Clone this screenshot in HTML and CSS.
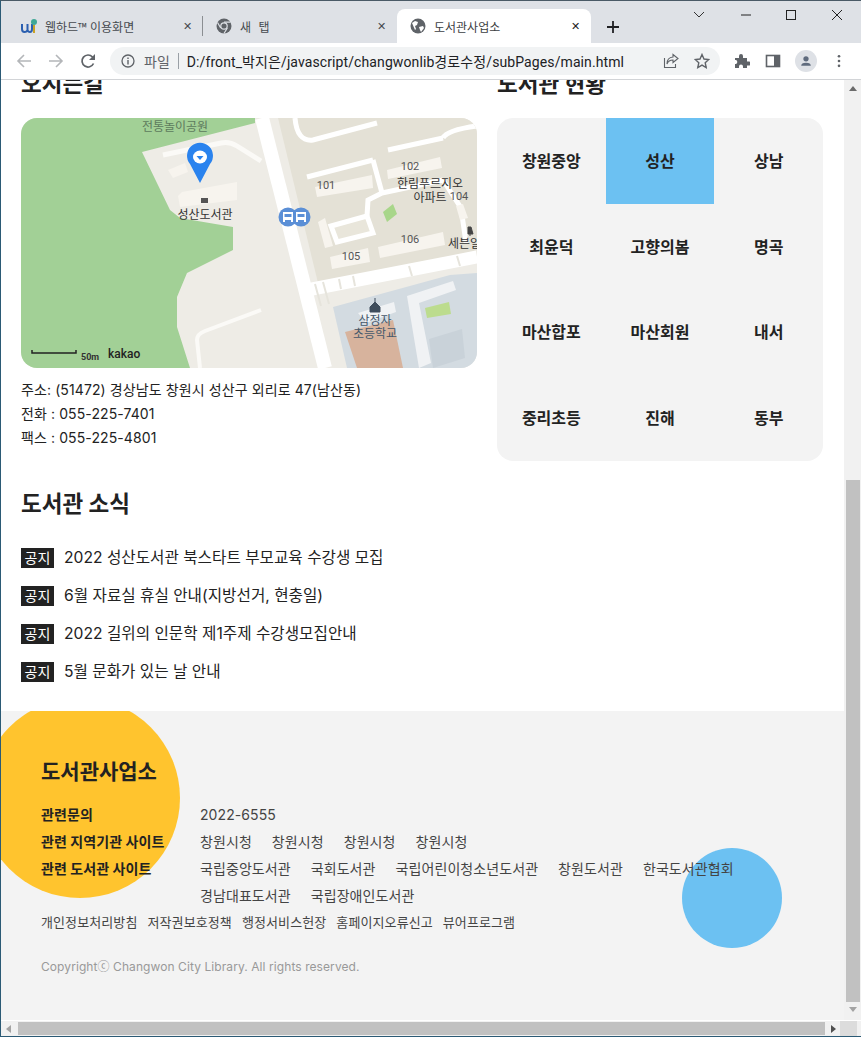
FILE: index.html
```html
<!DOCTYPE html>
<html lang="ko">
<head>
    <meta charset="UTF-8">
    <title>도서관사업소</title>
    <link rel="stylesheet" href="styles.css">
</head>
<body>
<div class="window">
    <!-- 탭 영역 -->
    <div class="tab-strip">
        <div class="tab tab-first">
            <svg class="tab-icon" viewBox="0 0 16 16">
                <path d="M1 6v5q0 3 2.500 3t3-2v-6m0 6q.5 2 2.500 2t2-3v-5" fill="none" stroke="#2b5fb0" stroke-width="2"/>
                <path d="M13 15V7" stroke="#c9a227" stroke-width="2"/>
                <circle cx="13" cy="4" r="3" fill="#3fa796"/>
            </svg>
            <span class="tab-title">웹하드™ 이용화면</span>
            <span class="tab-close">✕</span>
        </div>
        <div class="tab tab-second">
            <svg class="tab-icon" viewBox="0 0 16 16">
                <circle cx="8" cy="8" r="7.500" fill="#5f6368"/>
                <circle cx="8" cy="8" r="3.800" fill="#dee1e6"/>
                <circle cx="8" cy="8" r="2.600" fill="#5f6368"/>
                <path d="M8 4.200h6.500M4.700 10 1.500 4.500M11.300 10l-3.300 5.500" stroke="#dee1e6" stroke-width="1.200"/>
            </svg>
            <span class="tab-title tab-title-spaced">새 탭</span>
            <span class="tab-close">✕</span>
        </div>
        <div class="tab tab-active">
            <svg class="tab-icon" viewBox="0 0 16 16">
                <circle cx="8" cy="8" r="7.500" fill="#5f6368"/>
                <path d="M2 5l3-2 3 1-1 3-2 1 1 3-1 1zM9 9l4-1 1 2-3 4-1-2z" fill="#fff"/>
            </svg>
            <span class="tab-title">도서관사업소</span>
            <span class="tab-close tab-close-dark">✕</span>
        </div>
        <svg class="new-tab" viewBox="0 0 12 12"><path d="M6 0v12M0 6h12" stroke="#202124" stroke-width="1.800"/></svg>
        <div class="win-controls">
            <svg viewBox="0 0 12 12" class="win-chevron"><path d="M1 3l5 5 5-5" fill="none" stroke="#333" stroke-width="1"/></svg>
            <svg viewBox="0 0 12 12" class="win-min"><path d="M1 6h10" stroke="#222" stroke-width="1"/></svg>
            <svg viewBox="0 0 12 12" class="win-max"><rect x="1.500" y="1.500" width="9" height="9" fill="none" stroke="#222" stroke-width="1"/></svg>
            <svg viewBox="0 0 12 12" class="win-close"><path d="M1 1l10 10M11 1 1 11" stroke="#222" stroke-width="1"/></svg>
        </div>
    </div>

    <!-- 주소창 -->
    <div class="toolbar">
        <div class="nav-btns">
            <svg viewBox="0 0 16 16"><path d="M15 8H2M8 2 2 8l6 6" fill="none" stroke="#b4b6b9" stroke-width="1.600"/></svg>
            <svg viewBox="0 0 16 16"><path d="M1 8h13M8 2l6 6-6 6" fill="none" stroke="#b4b6b9" stroke-width="1.600"/></svg>
            <svg viewBox="0 0 16 16"><path d="M13.500 10.500A6 6 0 1 1 12.500 4L14 5.500" fill="none" stroke="#5f6368" stroke-width="1.700"/><path d="M15 1v6H9z" fill="#5f6368"/></svg>
        </div>
        <div class="omnibox">
            <svg class="info-icon" viewBox="0 0 14 14"><circle cx="7" cy="7" r="6" fill="none" stroke="#5f6368" stroke-width="1.300"/><path d="M7 6v4.500M7 3.500v1.500" stroke="#5f6368" stroke-width="1.400"/></svg>
            <span class="omni-scheme">파일</span>
            <span class="omni-sep"></span>
            <span class="omni-url">D:/front_박지은/javascript/changwonlib경로수정/subPages/main.html</span>
            <svg class="omni-share" viewBox="0 0 16 16"><path d="M1.500 5v9.500h11V11" fill="none" stroke="#5f6368" stroke-width="1.100"/><path d="M10 1.500l5 4-5 4V7Q5.500 7 4 11 4 4.500 10 4z" fill="none" stroke="#5f6368" stroke-width="1.100"/></svg>
            <svg class="omni-star" viewBox="0 0 16 16"><path d="M8 1.500l2 4.500 4.800.5-3.600 3.200 1 4.800L8 12.100l-4.200 2.400 1-4.800L1.200 6.500 6 6z" fill="none" stroke="#5f6368" stroke-width="1.400"/></svg>
        </div>
        <div class="tool-btns">
            <svg class="tool-ext" viewBox="0 0 16 16"><path d="M1 5h4V3a2 2 0 0 1 4 0v2h4v3.500h2a2 2 0 0 1 0 4h-2V15H9v-1.500a2 2 0 0 0-4 0V15H1v-4h1a2.200 2.200 0 0 0 0-4H1z" fill="#5f6368"/></svg>
            <svg class="tool-side" viewBox="0 0 16 16"><rect x="1.500" y="2.500" width="13" height="11" fill="none" stroke="#5f6368" stroke-width="1.600"/><rect x="9" y="2.500" width="5.500" height="11" fill="#5f6368"/></svg>
            <span class="profile"><svg viewBox="0 0 16 16"><circle cx="8" cy="5.500" r="3" fill="#5f6b7d"/><path d="M2.500 13.500q0-3.500 5.500-3.500t5.500 3.500z" fill="#5f6b7d"/></svg></span>
            <svg class="tool-menu" viewBox="0 0 4 16"><circle cx="2" cy="2.500" r="1.500" fill="#5f6368"/><circle cx="2" cy="8" r="1.500" fill="#5f6368"/><circle cx="2" cy="13.500" r="1.500" fill="#5f6368"/></svg>
        </div>
    </div>

    <!-- 페이지 -->
    <div class="view">
        <div class="view-row">
            <div class="page">
                <div class="info-row">
                    <section class="col-map">
                        <h2 class="sec-title">오시는길</h2>
                        <svg class="map" viewBox="0 0 456 250">
                            <rect width="456" height="250" fill="#eeece6"/>
                            <polygon points="0,0 234,0 234,5 121,34 149,92 159,100 212,109 212,132 166,155 156,179 156,209 169,250 0,250" fill="#a2d096"/>
                            <path d="M179 250 176 222Q176 216 184 213L240 192" fill="none" stroke="#fbfaf7" stroke-width="4"/>
                            <path d="M142 37 200 25Q208 23 216 28L240 43" fill="none" stroke="#fbfaf7" stroke-width="5"/>
                            <polygon points="161,74 216,64 216,82 159,89 157,78" fill="#f7f4ee"/>
                            <polygon points="147,52 164,45 167,54 152,60" fill="#f7f4ee"/>
                            <polygon points="257,0 297,165 436,139 456,132 456,0" fill="#e4e1d6"/>
                            <polygon points="312,189 429,157 456,155 456,250 326,250" fill="#d3dbe1"/>
                            <polygon points="324,214 372,202 382,250 336,250" fill="#d7b39d"/>
                            <path d="M241 0 304 250" stroke="#fff" stroke-width="14"/>
                            <path d="M286 172 456 139" stroke="#fff" stroke-width="13"/>
                            <path d="M294 166l6 22M302 164l6 22M318 161l2 10M332 158l2 10M388 148l3 10M436 138l3 10" stroke="#e6e4dc" stroke-width="2"/>
                            <path d="M274 0Q276 24 292 22L356 5" fill="none" stroke="#fff" stroke-width="5"/>
                            <path d="M286 59 352 42 M367 32 422 20" stroke="#fff" stroke-width="5"/>
                            <path d="M352 42 361 75 422 62M361 75 347 82 346 98M422 62 440 90 445 125" fill="none" stroke="#fff" stroke-width="5"/>
                            <path d="M346 98 310 108 316 124 352 115 346 98" fill="#e9e6db" stroke="#fff" stroke-width="5"/>
                            <path d="M422 20 Q426 12 456 8" fill="none" stroke="#fff" stroke-width="5"/>
                            <polygon points="294,69 351,57 352,70 296,79" fill="#f7f4ee"/>
                            <polygon points="366,52 419,39 421,50 367,61" fill="#f7f4ee"/>
                            <polygon points="309,139 347,130 349,144 311,151" fill="#f7f4ee"/>
                            <polygon points="357,129 422,114 424,127 359,140" fill="#f7f4ee"/>
                            <polygon points="297,104 304,100 312,128 304,130" fill="#f7f4ee"/>
                            <polygon points="435,88 442,86 447,100 439,102" fill="#f7f4ee"/>
                            <polygon points="362,94 372,86 376,96 366,104" fill="#a8d68a"/>
                            <polygon points="337,195 373,184 375,194 345,205" fill="#f0f2f4"/>
                            <polygon points="386,178 432,163 435,172 398,185 410,245 398,250" fill="#f0f2f4"/>
                            <polygon points="404,190 428,184 430,196 406,200" fill="#bcdc8e"/>
                            <polygon points="408,221 441,211 444,240 412,250" fill="#c9d2d9"/>
                            <text class="map-label map-park" x="154" y="13">전통놀이공원</text>
                            <text class="map-label map-dark" x="184" y="101">성산도서관</text>
                            <rect x="180" y="80" width="7" height="5" fill="#555"/>
                            <text class="map-num" x="305" y="71">101</text>
                            <text class="map-num" x="389" y="52">102</text>
                            <text class="map-num" x="330" y="142">105</text>
                            <text class="map-num" x="389" y="125">106</text>
                            <text class="map-num" x="438" y="82">104</text>
                            <text class="map-label map-dark" x="409" y="70">한림푸르지오</text>
                            <text class="map-label map-dark" x="409" y="84">아파트</text>
                            <text class="map-label map-dark map-start" x="427" y="130">세븐일레븐</text>
                            <path d="M447 109h3l2 7h-5zM448 117h2" stroke="#444" fill="#444" stroke-width="1"/>
                            <path d="M349 194v-5l5-5 5 5v5zM354 184v-4" fill="#3f4d5c" stroke="#3f4d5c"/>
                            <text class="map-label map-school" x="354" y="207">삼정자</text>
                            <text class="map-label map-school" x="354" y="220">초등학교</text>
                            <circle cx="267" cy="99" r="9.500" fill="#5b8fd6"/>
                            <circle cx="280" cy="99" r="9.500" fill="#5b8fd6"/>
                            <path d="M262 94h10v10h-2v-2h-6v2h-2zM275 94h10v10h-2v-2h-6v2h-2z" fill="#fff"/>
                            <path d="M263.500 96h7v3h-7zM276.500 96h7v3h-7z" fill="#5b8fd6"/>
                            <path d="M179 65 169 46A13 13 0 1 1 189 46Z" fill="#2a83ee"/>
                            <ellipse cx="179" cy="39" rx="7" ry="6.500" fill="#fff"/>
                            <path d="M175.500 38h7L179 42z" fill="#2a83ee"/>
                            <path d="M11 232v3h44v-3" fill="none" stroke="#222" stroke-width="1.500"/>
                            <text class="map-scale" x="60" y="242">50m</text>
                            <text class="map-logo" x="87" y="240">kakao</text>
                        </svg>
                        <div class="addr">
                            <p>주소: (51472) 경상남도 창원시 성산구 외리로 47(남산동)</p>
                            <p>전화 : 055-225-7401</p>
                            <p>팩스 : 055-225-4801</p>
                        </div>
                    </section>
                    <section class="col-status">
                        <h2 class="sec-title">도서관 현황</h2>
                        <div class="lib-grid">
                            <div class="lib-cell">창원중앙</div>
                            <div class="lib-cell on">성산</div>
                            <div class="lib-cell">상남</div>
                            <div class="lib-cell">최윤덕</div>
                            <div class="lib-cell">고향의봄</div>
                            <div class="lib-cell">명곡</div>
                            <div class="lib-cell">마산합포</div>
                            <div class="lib-cell">마산회원</div>
                            <div class="lib-cell">내서</div>
                            <div class="lib-cell">중리초등</div>
                            <div class="lib-cell">진해</div>
                            <div class="lib-cell">동부</div>
                        </div>
                    </section>
                </div>

                <section class="news">
                    <h2 class="sec-title">도서관 소식</h2>
                    <ul class="news-list">
                        <li><span class="badge">공지</span><span class="news-text">2022 성산도서관 북스타트 부모교육 수강생 모집</span></li>
                        <li><span class="badge">공지</span><span class="news-text">6월 자료실 휴실 안내(지방선거, 현충일)</span></li>
                        <li><span class="badge">공지</span><span class="news-text">2022 길위의 인문학 제1주제 수강생모집안내</span></li>
                        <li><span class="badge">공지</span><span class="news-text">5월 문화가 있는 날 안내</span></li>
                    </ul>
                </section>

                <footer class="footer">
                    <div class="circle-yellow"></div>
                    <div class="circle-blue"></div>
                    <div class="footer-body">
                        <h3 class="footer-title">도서관사업소</h3>
                        <dl class="footer-row">
                            <dt>관련문의</dt>
                            <dd>2022-6555</dd>
                        </dl>
                        <dl class="footer-row">
                            <dt>관련 지역기관 사이트</dt>
                            <dd><span>창원시청</span><span>창원시청</span><span>창원시청</span><span>창원시청</span></dd>
                        </dl>
                        <dl class="footer-row">
                            <dt>관련 도서관 사이트</dt>
                            <dd><span>국립중앙도서관</span><span>국회도서관</span><span>국립어린이청소년도서관</span><span>창원도서관</span><span>한국도서관협회</span><span>경남대표도서관</span><span>국립장애인도서관</span></dd>
                        </dl>
                        <div class="policy">
                            <span>개인정보처리방침</span><span>저작권보호정책</span><span>행정서비스헌장</span><span>홈페이지오류신고</span><span>뷰어프로그램</span>
                        </div>
                        <p class="copyright">Copyrightⓒ Changwon City Library. All rights reserved.</p>
                    </div>
                </footer>
            </div>
            <div class="vbar">
                <span class="arrow-up"></span>
                <span class="vbar-thumb"></span>
                <span class="arrow-down"></span>
            </div>
        </div>
        <div class="hbar">
            <span class="arrow-left"></span>
            <span class="hbar-thumb"></span>
            <span class="arrow-right"></span>
            <span class="hbar-corner"></span>
        </div>
    </div>
</div>
</body>
</html>
```

FILE: styles.css
```css
* {
    box-sizing: border-box;
}

body {
    margin: 0;
    background: #fff;
    color: #222;
    font-family: "Inter", "Noto Sans CJK KR", sans-serif;
}

h2, h3, p, ul, dl, dd {
    margin: 0;
    padding: 0;
}

.window {
    width: 861px;
    height: 1037px;
    overflow: hidden;
    display: flex;
    flex-direction: column;
    border-left: 1px solid #2b5a75;
    border-top: 1px solid #4a5a66;
    border-bottom: 1px solid #2b5a75;
}

/* tab strip */
.tab-strip {
    height: 42px;
    flex: none;
    display: flex;
    align-items: flex-end;
    background: #dee1e6;
    font-family: "Noto Sans CJK KR", sans-serif;
    font-size: 12px;
    color: #45494e;
}

.tab {
    height: 34px;
    display: flex;
    align-items: center;
    position: relative;
}

.tab-first {
    width: 202px;
    padding-left: 20px;
    border-right: 0;
}

.tab-first::after {
    content: "";
    position: absolute;
    right: 0;
    top: 7px;
    height: 20px;
    width: 1px;
    background: #8b8e92;
}

.tab-second {
    width: 194px;
    padding-left: 13px;
}

.tab-active {
    width: 194px;
    padding-left: 13px;
    background: #fff;
    border-radius: 8px 8px 0 0;
    color: #3c4043;
}

.tab-icon {
    width: 16px;
    height: 16px;
    margin-right: 8px;
    flex: none;
}

.tab-title {
    flex: 1;
    white-space: nowrap;
}

.tab-title-spaced {
    word-spacing: 4px;
}

.tab-close {
    width: 20px;
    font-size: 11px;
    font-weight: 700;
    color: #45494e;
    font-family: "DejaVu Sans", sans-serif;
}

.tab-close-dark {
    color: #222;
}

.new-tab {
    width: 12px;
    height: 12px;
    margin: 0 0 10px 16px;
}

.win-controls {
    position: absolute;
    top: 9px;
    left: 693px;
    display: flex;
    align-items: center;
}

.win-controls svg {
    width: 12px;
    height: 12px;
}

.win-chevron {
    margin-right: 35px;
}

.win-min {
    margin-right: 33px;
}

.win-max {
    margin-right: 34px;
}

/* toolbar */
.toolbar {
    height: 37px;
    flex: none;
    display: flex;
    align-items: center;
    background: #fff;
    border-bottom: 1px solid #d2d4d7;
    padding-bottom: 1px;
}

.nav-btns {
    width: 109px;
    display: flex;
    padding-left: 15px;
    gap: 16px;
}

.nav-btns svg {
    width: 16px;
    height: 16px;
}

.omnibox {
    width: 610px;
    height: 28px;
    display: flex;
    align-items: center;
    background: #f1f3f4;
    border-radius: 14px;
    padding-left: 11px;
    font-size: 14px;
    font-family: "Noto Sans CJK KR", sans-serif;
    color: #202124;
}

.info-icon {
    width: 14px;
    height: 14px;
    margin-right: 9px;
}

.omni-scheme {
    color: #5f6368;
}

.omni-sep {
    width: 1px;
    height: 16px;
    background: #9aa0a6;
    margin: 0 8px;
}

.omni-url {
    font-family: "Roboto", "Noto Sans CJK KR", sans-serif;
    font-size: 14px;
    white-space: nowrap;
    width: 476px;
    flex: none;
    letter-spacing: 0.1px;
}

.omni-share {
    width: 16px;
    height: 16px;
    margin-right: 15px;
}

.omni-star {
    width: 16px;
    height: 16px;
}

.tool-btns {
    display: flex;
    align-items: center;
    margin-left: 14px;
}

.tool-ext, .tool-side {
    width: 16px;
    height: 16px;
    margin-right: 15px;
}

.tool-side {
    margin-right: 14px;
}

.profile {
    width: 22px;
    height: 22px;
    border-radius: 50%;
    background: #dee1e6;
    display: flex;
    align-items: center;
    justify-content: center;
    margin-right: 20px;
}

.profile svg {
    width: 14px;
    height: 14px;
}

.tool-menu {
    width: 4px;
    height: 14px;
}

/* page area */
.view {
    flex: 1;
    min-height: 0;
    display: flex;
    flex-direction: column;
}

.view-row {
    flex: 1;
    min-height: 0;
    display: flex;
}

.page {
    width: 843px;
    flex: none;
    overflow: hidden;
    display: flex;
    flex-direction: column;
    background: #fff;
}

.info-row {
    display: flex;
    gap: 20px;
    padding-left: 20px;
    margin-top: -12px;
}

.col-map {
    width: 456px;
}

.col-status {
    width: 326px;
}

.sec-title {
    font-size: 22.5px;
    font-weight: 700;
    line-height: 32px;
    color: #222;
}

.map {
    display: block;
    width: 456px;
    height: 250px;
    margin-top: 18px;
    border-radius: 16px;
}

.map-label {
    font-size: 12px;
    text-anchor: middle;
    font-family: "Noto Sans CJK KR", sans-serif;
}

.map-start {
    text-anchor: start;
}

.map-park {
    fill: #5d7a5d;
}

.map-dark {
    fill: #333;
}

.map-school {
    fill: #45586b;
}

.map-num {
    font-size: 11px;
    fill: #555;
    font-family: "Roboto", sans-serif;
    text-anchor: middle;
}

.map-scale {
    font-size: 9px;
    font-weight: 700;
    fill: #333;
    font-family: "Roboto", sans-serif;
}

.map-logo {
    font-size: 12px;
    font-weight: 500;
    fill: #222;
    font-family: "Roboto", sans-serif;
}

.addr {
    margin-top: 10px;
    font-size: 14px;
    line-height: 24px;
    letter-spacing: 0.1px;
}

.lib-grid {
    margin-top: 18px;
    height: 343px;
    display: grid;
    grid-template-columns: repeat(3, 1fr);
    grid-template-rows: repeat(4, 1fr);
    background: #f3f3f3;
    border-radius: 16px;
    overflow: hidden;
}

.lib-cell {
    display: flex;
    align-items: center;
    justify-content: center;
    padding-bottom: 2px;
    font-size: 16px;
    font-weight: 700;
}

.lib-cell.on {
    background: #6cc1f2;
}

.news {
    padding: 0 20px;
    margin-top: 27px;
}

.news-list {
    list-style: none;
    margin-top: 28px;
    display: flex;
    flex-direction: column;
    gap: 18px;
}

.news-list li {
    display: flex;
    align-items: center;
    height: 20px;
}

.news-text {
    font-size: 15.65px;
    line-height: 18px;
}

.badge {
    width: 33px;
    height: 20px;
    margin-right: 10px;
    background: #222;
    color: #fff;
    font-size: 14px;
    text-align: center;
    line-height: 20px;
}

/* footer */
.footer {
    position: relative;
    flex: 1;
    margin-top: 29px;
    background: #f3f3f3;
    overflow: hidden;
}

.circle-yellow {
    position: absolute;
    left: -21px;
    top: -13px;
    width: 200px;
    height: 200px;
    border-radius: 50%;
    background: #ffc42e;
}

.circle-blue {
    position: absolute;
    left: 681px;
    top: 137px;
    width: 100px;
    height: 100px;
    border-radius: 50%;
    background: #6cc1f2;
}

.footer-body {
    position: relative;
    padding: 46px 0 0 40px;
}

.footer-title {
    font-size: 21px;
    font-weight: 700;
    line-height: 30px;
    margin-bottom: 14px;
}

.footer-row {
    display: flex;
    margin: 0;
    font-size: 14px;
    line-height: 27px;
    letter-spacing: 0.08px;
}

.footer-row dt {
    width: 159px;
    flex: none;
    font-weight: 700;
}

.footer-row dd {
    width: 560px;
    display: flex;
    flex-wrap: wrap;
    column-gap: 20px;
    color: #444;
}

.policy {
    display: flex;
    gap: 10px;
    font-size: 13px;
    line-height: 27px;
    letter-spacing: 0.1px;
    color: #444;
}

.copyright {
    margin-top: 22px;
    font-size: 12px;
    line-height: 18px;
    letter-spacing: 0.08px;
    color: #999;
}

/* scrollbars */
.vbar {
    width: 17px;
    flex: none;
    position: relative;
    background: #f1f1f1;
    display: flex;
    flex-direction: column;
    align-items: center;
}

.arrow-up {
    flex: none;
    margin-top: 6px;
    border: 4px solid transparent;
    border-top: 0;
    border-bottom: 5px solid #6b6b6b;
}

.vbar-thumb {
    width: 14px;
    height: 522px;
    margin-top: 389px;
    background: #c1c1c1;
}

.arrow-down {
    margin-top: 5px;
    border: 4px solid transparent;
    border-bottom: 0;
    border-top: 5px solid #a3a3a3;
}

.hbar {
    height: 16px;
    flex: none;
    display: flex;
    align-items: center;
    background: #f1f1f1;
    border-top: 1px solid #fff;
}

.arrow-left {
    margin-left: 5px;
    border: 4px solid transparent;
    border-left: 0;
    border-right: 5px solid #a3a3a3;
}

.hbar-thumb {
    width: 807px;
    height: 13px;
    margin-left: 7px;
    background: #c1c1c1;
}

.arrow-right {
    margin-left: 6px;
    border: 4px solid transparent;
    border-right: 0;
    border-left: 5px solid #505050;
}

.hbar-corner {
    width: 17px;
    height: 15px;
    margin-left: 4px;
    background: #dcdcdc;
}
```
